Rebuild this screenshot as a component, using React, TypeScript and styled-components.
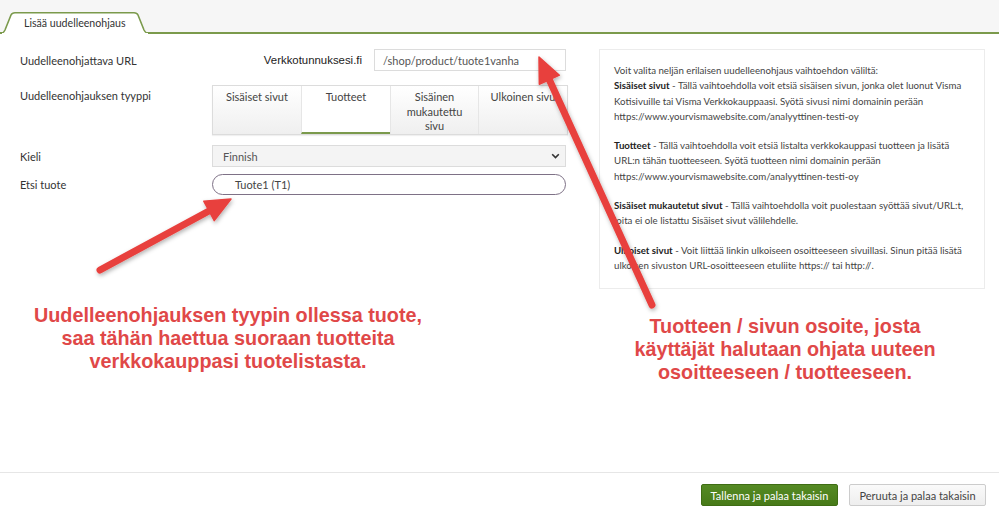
import { createGlobalStyle, styled } from "styled-components";

const GlobalStyle = createGlobalStyle`
  html, body {
    margin: 0;
    padding: 0;
    background: #ffffff;
  }
  body {
    font-family: "Open Sans", "Noto Sans", sans-serif;
    color: #444;
  }
  * {
    box-sizing: border-box;
  }
`;

const uiFont = `"Lato", "Open Sans", sans-serif`;
const green = "#7b9a4c";

const Page = styled.div`
  position: relative;
  height: 510px;
  display: flex;
  flex-direction: column;
  font-family: ${uiFont};
  overflow: hidden;
`;

const TopBar = styled.div`
  height: 34px;
  background: #f6f6f6;
  border-bottom: 2px solid ${green};
  display: flex;
  align-items: flex-end;
`;

const TabShape = styled.div`
  position: relative;
  width: 150px;
  height: 22px;
  margin-bottom: -2px;
  display: flex;
  align-items: center;
  padding-left: 24px;
  font-size: 10.6px;
  color: #333;

  svg {
    position: absolute;
    left: 0;
    top: 0;
  }
  span {
    position: relative;
  }
`;

const Main = styled.div`
  flex: 1;
  display: flex;
  gap: 33px;
  padding: 15px 14px 0 20px;
`;

const Form = styled.div`
  width: 546px;
  display: flex;
  flex-direction: column;
`;

const Row = styled.div<{ $top: number; $align?: string }>`
  display: flex;
  align-items: ${({ $align }) => $align || "center"};
  margin-top: ${({ $top }) => $top}px;
`;

const Label = styled.div<{ $pad?: number }>`
  width: 192px;
  flex-shrink: 0;
  font-size: 11px;
  color: #333;
  padding-top: ${({ $pad }) => $pad || 0}px;
`;

const Field = styled.div`
  flex: 1;
  display: flex;
  align-items: center;
`;

const Domain = styled.div`
  flex: 1;
  text-align: right;
  padding-right: 12px;
  font-family: "Liberation Sans", Arial, sans-serif;
  font-size: 11.4px;
  color: #222;
`;

const TextInput = styled.div`
  width: 192px;
  height: 22px;
  border: 1px solid #dcdcdc;
  padding-left: 8px;
  display: flex;
  align-items: center;
  font-size: 11px;
  color: #555;
`;

const TypeTabs = styled.div`
  flex: 1;
  display: grid;
  grid-template-columns: 88px 89px 88px 89px;
  height: 50px;
  border: 1px solid #dcdcdc;
  box-shadow: 0 1px 1px rgba(0, 0, 0, 0.06);
`;

const TypeTab = styled.div<{ $active?: boolean }>`
  text-align: center;
  font-size: 11px;
  line-height: 14.5px;
  color: #444;
  padding-top: 4px;
  border-left: 1px solid #e6e6e6;
  background: ${({ $active }) =>
    $active ? "#ffffff" : "linear-gradient(#ffffff, #efefef)"};
  border-bottom: ${({ $active }) => ($active ? `2px solid ${green}` : "none")};

  &:first-child {
    border-left: none;
  }
`;

const Select = styled.div`
  flex: 1;
  height: 22px;
  border: 1px solid #dcdcdc;
  background: #f4f4f4;
  display: flex;
  align-items: center;
  justify-content: space-between;
  padding: 0 5px 0 10px;
  font-size: 11px;
  color: #555;
`;

const Search = styled.div`
  flex: 1;
  height: 21px;
  border: 1px solid #7e7186;
  border-radius: 11px;
  display: flex;
  align-items: center;
  padding-left: 22px;
  font-size: 11px;
  color: #444;
`;

const InfoBox = styled.div`
  width: 387px;
  height: 240px;
  border: 1px solid #ececec;
  padding: 13px 14px;
  font-size: 9.7px;
  line-height: 15.3px;
  color: #444;
  white-space: nowrap;

  p {
    margin: 0 0 14px;
  }
  b {
    font-weight: 700;
    color: #222;
  }
`;

const Footer = styled.div`
  height: 38px;
  border-top: 1px solid #e6e6e6;
  display: flex;
  justify-content: flex-end;
  gap: 11px;
  padding: 11px 13px 0 0;
`;

const Button = styled.div<{ $primary?: boolean }>`
  width: 137px;
  height: 22px;
  display: flex;
  align-items: center;
  justify-content: center;
  font-size: 11px;
  border-radius: 2px;
  color: ${({ $primary }) => ($primary ? "#ffffff" : "#444")};
  background: ${({ $primary }) =>
    $primary ? "linear-gradient(#558a24, #477a18)" : "linear-gradient(#fafafa, #eeeeee)"};
  border: 1px solid ${({ $primary }) => ($primary ? "#3f6d14" : "#cccccc")};
`;

const Overlay = styled.svg`
  position: absolute;
  left: 0;
  top: 0;
  pointer-events: none;
`;

const Callout = styled.div<{ $x: number; $y: number }>`
  position: absolute;
  left: ${({ $x }) => $x}px;
  top: ${({ $y }) => $y}px;
  transform: translateX(-50%);
  white-space: nowrap;
  text-align: center;
  font-family: "Liberation Sans", Arial, sans-serif;
  font-weight: 700;
  font-size: 19.8px;
  line-height: 23px;
  color: #e04848;
`;

const Arrow = ({ x1, y1, x2, y2 }: { x1: number; y1: number; x2: number; y2: number }) => {
  const dx = x2 - x1;
  const dy = y2 - y1;
  const len = Math.hypot(dx, dy);
  const ux = dx / len;
  const uy = dy / len;
  const head = 25;
  const half = 11;
  const bx = x2 - head * ux;
  const by = y2 - head * uy;
  const px = -uy;
  const py = ux;
  return (
    <g filter="url(#shadow)">
      <line x1={x1} y1={y1} x2={bx + ux * 2} y2={by + uy * 2} stroke="#e8403e" strokeWidth={7} strokeLinecap="round" />
      <polygon
        points={`${x2},${y2} ${bx + half * px},${by + half * py} ${bx - half * px},${by - half * py}`}
        fill="#e8403e"
        stroke="#e8403e"
        strokeWidth={1.5}
        strokeLinejoin="round"
      />
    </g>
  );
};

const infoParagraphs = [
  [
    <>Voit valita neljän erilaisen uudelleenohjaus vaihtoehdon väliltä:</>,
    <><b>Sisäiset sivut</b> - Tällä vaihtoehdolla voit etsiä sisäisen sivun, jonka olet luonut Visma</>,
    <>Kotisivuille tai Visma Verkkokauppaasi. Syötä sivusi nimi domainin perään</>,
    <>https://www.yourvismawebsite.com/analyyttinen-testi-oy</>,
  ],
  [
    <><b>Tuotteet</b> - Tällä vaihtoehdolla voit etsiä listalta verkkokauppasi tuotteen ja lisätä</>,
    <>URL:n tähän tuotteeseen. Syötä tuotteen nimi domainin perään</>,
    <>https://www.yourvismawebsite.com/analyyttinen-testi-oy</>,
  ],
  [
    <><b>Sisäiset mukautetut sivut</b> - Tällä vaihtoehdolla voit puolestaan syöttää sivut/URL:t,</>,
    <>joita ei ole listattu Sisäiset sivut välilehdelle.</>,
  ],
  [
    <><b>Ulkoiset sivut</b> - Voit liittää linkin ulkoiseen osoitteeseen sivuillasi. Sinun pitää lisätä</>,
    <>ulkoisen sivuston URL-osoitteeseen etuliite https:// tai http://.</>,
  ],
];

const App = () => {
  return (
    <>
      <GlobalStyle />
      <Page>
        <TopBar>
          <TabShape>
            <svg width="150" height="22" viewBox="0 0 150 22">
              <path
                d="M0 22 Q3 22 5 18 L11 3 Q12 0.8 15 0.8 L134 0.8 Q137 0.8 138 3 L144 18 Q146 22 150 22 Z"
                fill="#ffffff"
                stroke={green}
                strokeWidth={1.6}
              />
              <rect x="2" y="21" width="146" height="2" fill="#ffffff" />
            </svg>
            <span>Lisää uudelleenohjaus</span>
          </TabShape>
        </TopBar>

        <Main>
          <Form>
            <Row $top={0}>
              <Label>Uudelleenohjattava URL</Label>
              <Field>
                <Domain>Verkkotunnuksesi.fi</Domain>
                <TextInput>/shop/product/tuote1vanha</TextInput>
              </Field>
            </Row>
            <Row $top={14} $align="flex-start">
              <Label $pad={4}>Uudelleenohjauksen tyyppi</Label>
              <TypeTabs>
                <TypeTab>Sisäiset sivut</TypeTab>
                <TypeTab $active>Tuotteet</TypeTab>
                <TypeTab>
                  Sisäinen
                  <br />
                  mukautettu
                  <br />
                  sivu
                </TypeTab>
                <TypeTab>Ulkoinen sivu</TypeTab>
              </TypeTabs>
            </Row>
            <Row $top={10}>
              <Label>Kieli</Label>
              <Select>
                <span>Finnish</span>
                <svg width="9" height="6" viewBox="0 0 9 6">
                  <path d="M1.2 1.2 L4.5 4.5 L7.8 1.2" fill="none" stroke="#333" strokeWidth={1.6} />
                </svg>
              </Select>
            </Row>
            <Row $top={7}>
              <Label>Etsi tuote</Label>
              <Search>Tuote1 (T1)</Search>
            </Row>
          </Form>

          <InfoBox>
            {infoParagraphs.map((lines, i) => (
              <p key={i}>
                {lines.map((line, j) => (
                  <span key={j}>
                    {line}
                    {j < lines.length - 1 && <br />}
                  </span>
                ))}
              </p>
            ))}
          </InfoBox>
        </Main>

        <Footer>
          <Button $primary>Tallenna ja palaa takaisin</Button>
          <Button>Peruuta ja palaa takaisin</Button>
        </Footer>

        <Callout $x={228} $y={304}>
          Uudelleenohjauksen tyypin ollessa tuote,
          <br />
          saa tähän haettua suoraan tuotteita
          <br />
          verkkokauppasi tuotelistasta.
        </Callout>
        <Callout $x={785} $y={315}>
          Tuotteen / sivun osoite, josta
          <br />
          käyttäjät halutaan ohjata uuteen
          <br />
          osoitteeseen / tuotteeseen.
        </Callout>

        <Overlay width="999" height="510" viewBox="0 0 999 510">
          <defs>
            <filter id="shadow" x="-20%" y="-20%" width="140%" height="140%">
              <feDropShadow dx="1" dy="2" stdDeviation="2" floodColor="#000" floodOpacity="0.3" />
            </filter>
          </defs>
          <Arrow x1={100} y1={270} x2={231} y2={199} />
          <Arrow x1={652} y1={305} x2={539} y2={57} />
        </Overlay>
      </Page>
    </>
  );
};

export default App;
